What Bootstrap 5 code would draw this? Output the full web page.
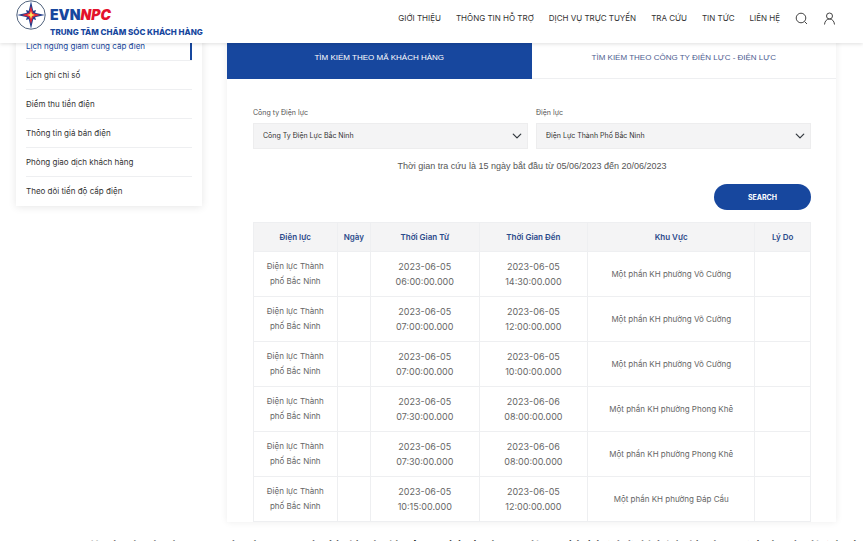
<!DOCTYPE html>
<html lang="vi">
<head>
<meta charset="utf-8">
<meta name="viewport" content="width=device-width, initial-scale=1">
<title>EVNNPC - Trung tâm chăm sóc khách hàng</title>
<link rel="stylesheet" href="https://cdn.jsdelivr.net/npm/bootstrap@5.3.0/dist/css/bootstrap.min.css">
<style>
:root { --evn-blue: #17479e; --evn-line: #eeeff1; --evn-soft: #f4f4f5; }
body { font-family: Inter, "Open Sans", sans-serif; font-size: 8px; line-height: 15px; color: #555; background: #fff; height: 100vh; overflow: hidden; }
a { text-decoration: none; color: inherit; }
.site-head { height: 43px; padding: 0 27px 0 16px; background: #fff; box-shadow: 0 1px 4px rgba(0,0,0,.13); z-index: 5; }
.brand-mark { width: 30px; height: 30px; margin-right: 4px; }
.brand-name { font-size: 14px; line-height: 15px; font-weight: 900; color: var(--evn-blue); padding-top: 7px; }
.brand-name em { color: #e3122c; }
.brand-sub { font-size: 8px; line-height: 10px; font-weight: 800; color: var(--evn-blue); margin-top: 5px; white-space: nowrap; }
.main-nav { gap: 15px; height: 36px; color: #333; white-space: nowrap; }
.icon-btn { width: 13px; height: 13px; line-height: 0; color: #444; }
.page-grid { display: grid; grid-template-columns: 186fr 609fr; gap: 25px; padding: 0 27px 0 16px; margin-top: -11px; align-items: start; }
.side-menu { box-shadow: 0 1px 8px rgba(0,0,0,.1); padding: 0 10px; color: #333; }
.side-menu a { height: 29px; line-height: 28px; border-bottom: 1px solid var(--evn-line); white-space: nowrap; display: block; }
.side-menu li:last-child a { border-bottom: 0; }
.side-menu a.current { color: var(--evn-blue); box-shadow: inset -2px 0 var(--evn-blue); }
.panel { box-shadow: 0 0 7px rgba(0,0,0,.08); }
.tab-btn, .note { font-family: "Liberation Sans", Arial, sans-serif; }
.tab-btn { height: 47px; padding: 4px 0 0; border: 0; border-bottom: 1px solid var(--evn-line); background: #fff; color: #4d5d90; font-size: 8px; }
.tab-btn.active { background: var(--evn-blue); color: #fff; border-color: var(--evn-blue); }
.panel-body { padding: 26px 25px 0 26px; }
.field-label { font-size: 7px; line-height: 15px; margin-bottom: 3px; }
.field-select { height: 26px; padding: 0 9px; border: 1px solid #ededee; border-radius: 0; font-size: 7px; line-height: 16px; color: #333; background-color: var(--evn-soft); background-size: 10px 10px; background-position: right 5px center; }
.note { font-size: 9px; line-height: 15px; margin: 10px 0; }
.search-btn { width: 97px; height: 26px; border: 0; background: var(--evn-blue); font-size: 7px; font-weight: 700; color: #fff; }
.outage { table-layout: fixed; font-size: 8px; line-height: 15px; margin: 12px 0 0; border-color: var(--evn-line); }
.outage th { height: 29px; padding: 0; background: var(--evn-soft); color: #2b4a8b; font-weight: 600; white-space: nowrap; vertical-align: middle; }
.outage td { height: 45px; padding: 0 8px; color: #666; }
.outage .stamp { font-size: 9px; padding: 0; }
.w-unit { width: 15%; } .w-day { width: 6%; } .w-time { width: 19.5%; } .w-area { width: 30%; } .w-why { width: 10%; }
.caption-line { font-family: "Noto Sans CJK SC", sans-serif; font-size: 20px; line-height: 30px; color: #111; margin: 13px 0 0 25px; white-space: nowrap; }
</style>
<script defer src="https://cdn.jsdelivr.net/npm/bootstrap@5.3.0/dist/js/bootstrap.bundle.min.js"></script>
</head>
<body>
<header class="site-head position-relative d-flex justify-content-between align-items-start">
  <a href="#" class="d-flex">
    <svg class="brand-mark" viewBox="0 0 30 30" aria-hidden="true">
      <circle cx="15" cy="15" r="14.2" fill="#fff" stroke="#52647e" stroke-width="1"/>
      <path d="M15 1l2.600 11.400 11.400 2.600-11.400 2.600-2.600 11.400-2.600-11.400-11.400-2.600 11.400-2.600z" fill="#24408e"/>
      <path d="M10 10l5 1.500 5-1.500-1.500 5 1.500 5-5-1.500-5 1.500 1.500-5z" fill="#24408e"/>
      <path d="M15 6l2 7 7 2-7 2-2 7-2-7-7-2 7-2z" fill="#e3263a"/>
      <path d="M15 11l1 3 3 1-3 1-1 3-1-3-3-1 3-1z" fill="#ffe45c"/>
    </svg>
    <span class="d-block">
      <span class="brand-name d-block">EVN<em>NPC</em></span>
      <span class="brand-sub d-block">TRUNG TÂM CHĂM SÓC KHÁCH HÀNG</span>
    </span>
  </a>
  <nav class="main-nav d-flex align-items-center">
    <a href="#">GIỚI THIỆU</a>
    <a href="#">THÔNG TIN HỖ TRỢ</a>
    <a href="#">DỊCH VỤ TRỰC TUYẾN</a>
    <a href="#">TRA CỨU</a>
    <a href="#">TIN TỨC</a>
    <a href="#">LIÊN HỆ</a>
    <button type="button" class="icon-btn btn p-0 border-0" aria-label="Tìm kiếm"><svg width="13" height="13" viewBox="0 0 13 13" fill="none" stroke="currentColor"><circle cx="6" cy="6" r="4.800"/><path d="M9.500 9.500l2.500 2.500"/></svg></button>
    <button type="button" class="icon-btn btn p-0 border-0" aria-label="Tài khoản"><svg width="13" height="13" viewBox="0 0 13 13" fill="none" stroke="currentColor"><circle cx="6.500" cy="4" r="3"/><path d="M1.500 12.500c.3-3.500 2.300-5.500 5-5.500s4.700 2 5 5.500"/></svg></button>
  </nav>
</header>
<main class="page-grid">
  <ul class="side-menu list-unstyled mb-0">
    <li><a href="#" class="current">Lịch ngừng giảm cung cấp điện</a></li>
    <li><a href="#">Lịch ghi chỉ số</a></li>
    <li><a href="#">Điểm thu tiền điện</a></li>
    <li><a href="#">Thông tin giá bán điện</a></li>
    <li><a href="#">Phòng giao dịch khách hàng</a></li>
    <li><a href="#">Theo dõi tiến độ cấp điện</a></li>
  </ul>
  <section class="panel">
    <div class="d-flex">
      <button type="button" class="tab-btn active w-50">TÌM KIẾM THEO MÃ KHÁCH HÀNG</button>
      <button type="button" class="tab-btn w-50">TÌM KIẾM THEO CÔNG TY ĐIỆN LỰC - ĐIỆN LỰC</button>
    </div>
    <div class="panel-body">
      <form class="d-flex gap-2">
        <div class="w-50">
          <label class="field-label d-block" for="company">Công ty Điện lực</label>
          <select class="field-select form-select" id="company"><option>Công Ty Điện Lực Bắc Ninh</option></select>
        </div>
        <div class="w-50">
          <label class="field-label d-block" for="unit">Điện lực</label>
          <select class="field-select form-select" id="unit"><option>Điện Lực Thành Phố Bắc Ninh</option></select>
        </div>
      </form>
      <p class="note text-center">Thời gian tra cứu là 15 ngày bắt đầu từ 05/06/2023 đến 20/06/2023</p>
      <div class="d-flex justify-content-end"><button type="button" class="search-btn rounded-pill">SEARCH</button></div>
      <table class="outage table table-bordered text-center align-middle">
        <thead><tr><th class="w-unit">Điện lực</th><th class="w-day">Ngày</th><th class="w-time">Thời Gian Từ</th><th class="w-time">Thời Gian Đến</th><th class="w-area">Khu Vực</th><th class="w-why">Lý Do</th></tr></thead>
        <tbody>
          <tr><td>Điện lực Thành<br>phố Bắc Ninh</td><td></td><td class="stamp">2023-06-05<br>06:00:00.000</td><td class="stamp">2023-06-05<br>14:30:00.000</td><td>Một phần KH phường Võ Cường</td><td></td></tr>
          <tr><td>Điện lực Thành<br>phố Bắc Ninh</td><td></td><td class="stamp">2023-06-05<br>07:00:00.000</td><td class="stamp">2023-06-05<br>12:00:00.000</td><td>Một phần KH phường Võ Cường</td><td></td></tr>
          <tr><td>Điện lực Thành<br>phố Bắc Ninh</td><td></td><td class="stamp">2023-06-05<br>07:00:00.000</td><td class="stamp">2023-06-05<br>10:00:00.000</td><td>Một phần KH phường Võ Cường</td><td></td></tr>
          <tr><td>Điện lực Thành<br>phố Bắc Ninh</td><td></td><td class="stamp">2023-06-05<br>07:30:00.000</td><td class="stamp">2023-06-06<br>08:00:00.000</td><td>Một phần KH phường Phong Khê</td><td></td></tr>
          <tr><td>Điện lực Thành<br>phố Bắc Ninh</td><td></td><td class="stamp">2023-06-05<br>07:30:00.000</td><td class="stamp">2023-06-06<br>08:00:00.000</td><td>Một phần KH phường Phong Khê</td><td></td></tr>
          <tr><td>Điện lực Thành<br>phố Bắc Ninh</td><td></td><td class="stamp">2023-06-05<br>10:15:00.000</td><td class="stamp">2023-06-05<br>12:00:00.000</td><td>Một phần KH phường Đáp Cầu</td><td></td></tr>
        </tbody>
      </table>
    </div>
  </section>
</main>
<p class="caption-line">下图是北宁省电力公司在官网公布的停电信息，其中各工业区将按计划轮流停电，请各企业注意</p>
</body>
</html>
